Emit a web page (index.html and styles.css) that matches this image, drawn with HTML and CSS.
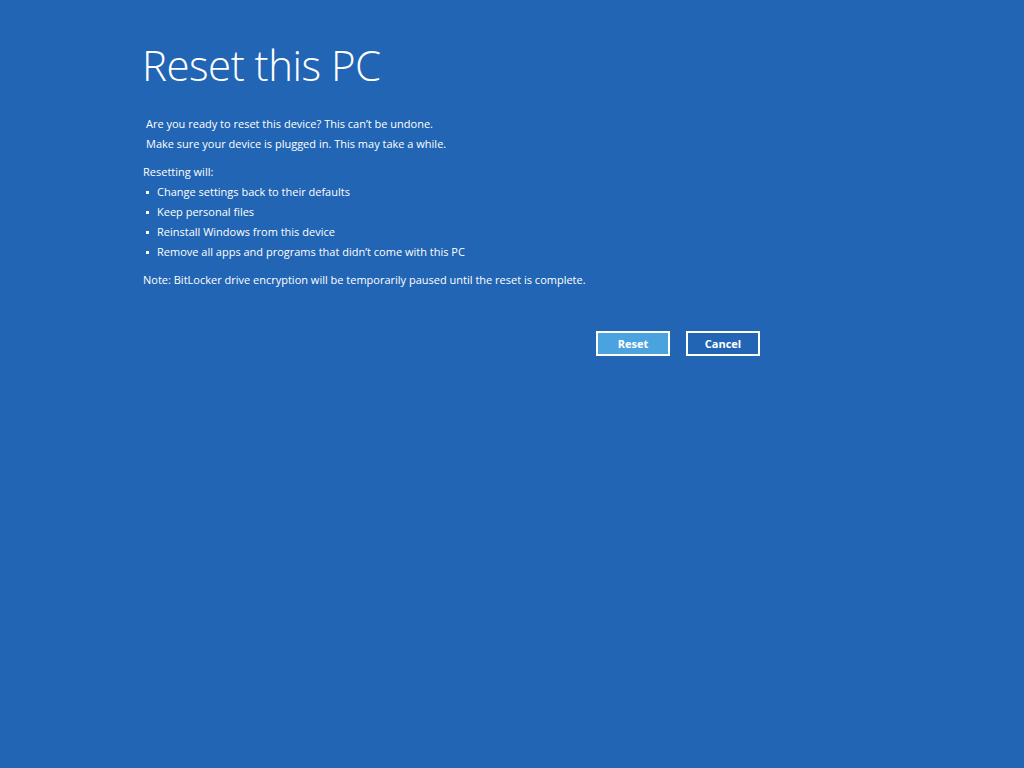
FILE: index.html
```html
<!DOCTYPE html>
<html lang="en">
<head>
  <meta charset="UTF-8">
  <title>Reset this PC</title>
  <link rel="stylesheet" href="styles.css">
</head>
<body>
  <div class="page">
    <h1 class="title">Reset this PC</h1>
    <div class="intro">
      <p>Are you ready to reset this device? This can’t be undone.</p>
      <p>Make sure your device is plugged in. This may take a while.</p>
    </div>
    <p class="lead">Resetting will:</p>
    <ul class="list">
      <li>Change settings back to their defaults</li>
      <li>Keep personal files</li>
      <li>Reinstall Windows from this device</li>
      <li>Remove all apps and programs that didn’t come with this PC</li>
    </ul>
    <p class="note">Note: BitLocker drive encryption will be temporarily paused until the reset is complete.</p>
    <div class="actions">
      <button class="btn primary">Reset</button>
      <button class="btn">Cancel</button>
    </div>
  </div>
</body>
</html>
```

FILE: styles.css
```css
* {
  margin: 0;
  padding: 0;
  box-sizing: border-box;
}
html, body {
  height: 100%;
}
body {
  background: #2165b4;
  color: #fff;
  font-family: "Open Sans", "Noto Sans", sans-serif;
  font-size: 11px;
}
.page {
  width: 620px;
  margin-left: 142px;
  padding-top: 37px;
}
.title {
  font-weight: 300;
  font-size: 42px;
  line-height: 56px;
  letter-spacing: -0.5px;
}
.intro {
  margin-top: 21px;
  padding-left: 4px;
}
.intro p,
.lead,
.list li,
.note {
  line-height: 20px;
}
.lead {
  margin-top: 8px;
  padding-left: 1px;
}
.list {
  list-style: none;
}
.list li {
  position: relative;
  padding-left: 15px;
}
.list li::before {
  content: "";
  position: absolute;
  left: 4px;
  top: 9px;
  width: 3px;
  height: 3px;
  background: #fff;
}
.note {
  margin-top: 8px;
  padding-left: 1px;
}
.actions {
  display: flex;
  justify-content: flex-end;
  gap: 16px;
  margin-top: 41px;
  padding-right: 2px;
}
.btn {
  width: 74px;
  height: 25px;
  border: 2px solid #fff;
  background: #2165b4;
  color: #fff;
  font-family: "Open Sans", "Noto Sans", sans-serif;
  font-size: 11px;
  font-weight: 700;
}
.btn.primary {
  background: #4aa3df;
}
```
